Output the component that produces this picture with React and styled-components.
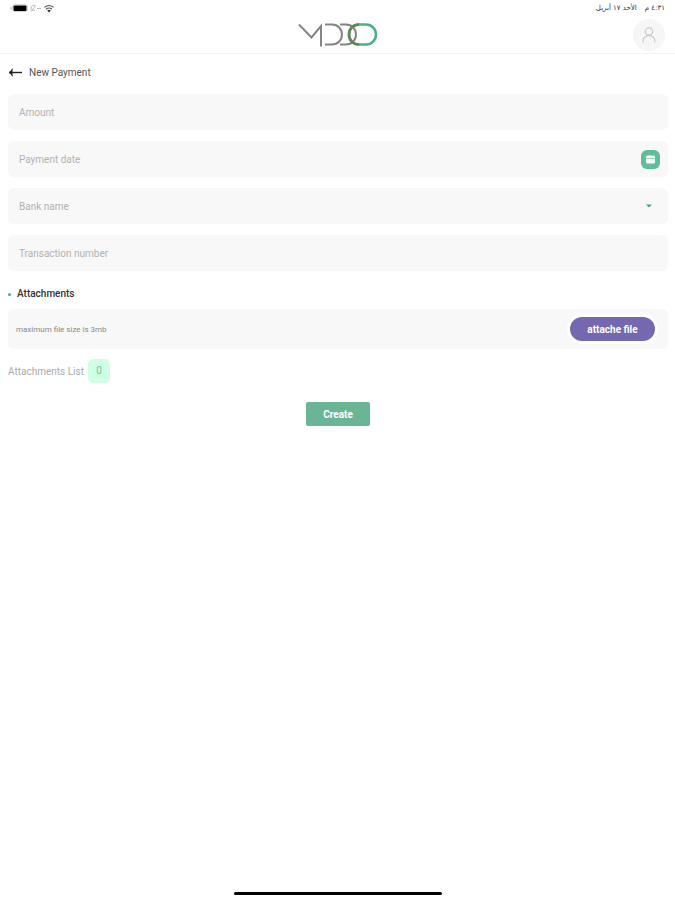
import { useState } from "react";
import styled, { createGlobalStyle } from "styled-components";

const GlobalStyle = createGlobalStyle`
  * {
    box-sizing: border-box;
  }
  body {
    margin: 0;
    background: #ffffff;
    font-family: Roboto, "Liberation Sans", sans-serif;
  }
  button, input, select {
    font-family: inherit;
  }
`;

const fields = [
  { name: "amount", label: "Amount" },
  { name: "date", label: "Payment date" },
  { name: "bank", label: "Bank name" },
  { name: "transaction", label: "Transaction number" },
];

const App = () => {
  const [values, setValues] = useState({
    amount: "",
    date: "",
    bank: "",
    transaction: "",
  });

  const handleChange = (e) => {
    setValues({ ...values, [e.target.name]: e.target.value });
  };

  return (
    <Page>
      <GlobalStyle />
      <StatusBar>
        <StatusIcons />
        <StatusTime dir="rtl" lang="ar">
          <span>٤:٣١ م</span>
          <span>الأحد ١٧ أبريل</span>
        </StatusTime>
      </StatusBar>

      <Header>
        <Logo />
        <Avatar type="button" aria-label="Profile">
          <svg width="14" height="16" viewBox="0 0 14 16" fill="none" stroke="#cccccc" strokeWidth="1.2">
            <circle cx="7" cy="4.5" r="3.7" />
            <path d="M1.2 15.5V13.5C1.2 11.2 3.6 9.2 7 8.2C10.4 9.2 12.8 11.2 12.8 13.5V15.5" />
          </svg>
        </Avatar>
      </Header>

      <Main>
        <TitleRow>
          <BackLink href="#" aria-label="Back">
            <svg width="14" height="10" viewBox="0 0 14 10" fill="none" stroke="#222222" strokeWidth="1.4">
              <path d="M14 5.5H1.5" />
              <path d="M4.5 1.7Q3.6 4.3 1 5.5Q3.6 6.7 4.5 9.3" fill="#222222" strokeWidth="1" />
            </svg>
          </BackLink>
          <Title>New Payment</Title>
        </TitleRow>

        <form onSubmit={(e) => e.preventDefault()}>
          <FieldList>
            {fields.map(({ name, label }) => (
              <Field key={name}>
                {name === "bank" ? (
                  <BankSelect name={name} aria-label={label} value={values.bank} onChange={handleChange}>
                    <option value="">{label}</option>
                  </BankSelect>
                ) : (
                  <TextInput
                    name={name}
                    type="text"
                    aria-label={label}
                    placeholder={label}
                    value={values[name]}
                    onChange={handleChange}
                  />
                )}
                {name === "date" && (
                  <DateButton type="button" aria-label="Choose date">
                    <svg width="9" height="9" viewBox="0 0 9 9">
                      <rect y="0.5" width="9" height="8" rx="1.5" fill="#ffffff" />
                      <path d="M0.5 3.5H8.5" stroke="#8bcdb3" />
                    </svg>
                  </DateButton>
                )}
                {name === "bank" && (
                  <Caret width="6" height="4" viewBox="0 0 6 4">
                    <path d="M0 0.5H6L3 3.5Z" fill="#3fa58a" />
                  </Caret>
                )}
              </Field>
            ))}
          </FieldList>

          <SectionTitle>Attachments</SectionTitle>
          <AttachBox>
            <Hint>maximum file size is 3mb</Hint>
            <AttachButton type="button">attache file</AttachButton>
          </AttachBox>
          <AttachList>
            Attachments List <Count>0</Count>
          </AttachList>

          <CreateButton type="submit">Create</CreateButton>
        </form>
      </Main>
      <HomeIndicator />
    </Page>
  );
};
export default App;

const StatusIcons = () => (
  <svg width="44" height="10" viewBox="0 0 44 10">
    <rect x="2.5" y="1.5" width="15" height="7" rx="2" fill="none" stroke="#c8c8c8" strokeWidth="0.8" />
    <rect x="3.5" y="2.5" width="13" height="5.5" rx="1" fill="#000000" />
    <path d="M1 4V6.5" stroke="#aaaaaa" />
    <g fill="none" stroke="#aaaaaa" strokeWidth="0.8">
      <path d="M25 3A2.5 2.5 0 1 0 25 7M26 2.5L21 8.5" />
      <path d="M27 5.5H31" />
    </g>
    <g fill="none" stroke="#555555" strokeWidth="1.2">
      <path d="M34.5 4.4Q39 0.6 43.5 4.4" />
      <path d="M36 6.2Q39 3.8 42 6.2" />
    </g>
    <path d="M37.2 7.5Q39 6.2 40.8 7.5L39 9.6Z" fill="#333333" />
  </svg>
);

const Logo = () => (
  <svg width="80" height="26" viewBox="0 0 80 26" fill="none" role="img" aria-label="MDDO">
    <g stroke="#858585" strokeWidth="2">
      <path d="M1 2.5L13.5 15.5L23 4V24.5" />
      <path d="M27 2.5H34C40 2.5 44 7 44 12.5S40 22.5 34 22.5H27" />
      <path d="M42 2.5H48C54 2.5 58 7 58 12.5S54 22.5 48 22.5H42" />
    </g>
    <rect x="51" y="2.5" width="27" height="20" rx="10" stroke="#50ae85" strokeWidth="2.6" />
    <path d="M61 2.5C55 2.5 51 7 51 12.5S55 22.5 61 22.5" stroke="#648559" strokeWidth="2.6" />
  </svg>
);

const Page = styled.div`
  min-height: 100vh;
  display: flex;
  flex-direction: column;
`;

const StatusBar = styled.div`
  height: 16px;
  padding: 0 10px;
  display: flex;
  align-items: center;
  justify-content: space-between;
`;

const StatusTime = styled.div`
  display: flex;
  gap: 8px;
  font-family: "DejaVu Sans", sans-serif;
  font-size: 7px;
  line-height: 16px;
  color: #333333;
`;

const Header = styled.header`
  height: 38px;
  padding: 0 10px;
  display: grid;
  grid-template-columns: 1fr auto 1fr;
  align-items: center;
  border-bottom: 1px solid #f2f2f2;
  > svg {
    grid-column: 2;
  }
`;

const Avatar = styled.button`
  justify-self: end;
  width: 32px;
  height: 32px;
  padding: 0;
  display: flex;
  align-items: center;
  justify-content: center;
  border: none;
  border-radius: 50%;
  background: #f6f6f6;
`;

const Main = styled.main`
  flex: 1;
  padding: 0 7px 0 8px;
`;

const TitleRow = styled.div`
  height: 36px;
  margin-bottom: 4px;
  display: flex;
  align-items: center;
  gap: 7px;
`;

const BackLink = styled.a`
  display: flex;
`;

const Title = styled.h1`
  margin: 0;
  font-size: 10px;
  font-weight: 400;
  color: #555555;
`;

const FieldList = styled.div`
  display: flex;
  flex-direction: column;
  gap: 11px;
`;

const Field = styled.div`
  display: flex;
  align-items: center;
  height: 36px;
  padding: 0 8px 0 11px;
  border-radius: 6px;
  background: #f8f8f8;
`;

const TextInput = styled.input`
  flex: 1;
  min-width: 0;
  height: 100%;
  padding: 0;
  border: none;
  outline: none;
  background: transparent;
  font-size: 10px;
  color: #555555;
  &::placeholder {
    color: #b2b2b2;
  }
`;

const BankSelect = styled.select`
  flex: 1;
  min-width: 0;
  height: 100%;
  padding: 0;
  border: none;
  outline: none;
  appearance: none;
  background: transparent;
  font-size: 10px;
  color: #b2b2b2;
`;

const DateButton = styled.button`
  width: 19px;
  height: 19px;
  padding: 0;
  display: flex;
  align-items: center;
  justify-content: center;
  border: none;
  border-radius: 6px;
  background: #5fbe98;
`;

const Caret = styled.svg`
  margin-right: 8px;
`;

const SectionTitle = styled.h2`
  margin: 16px 0 8px;
  display: flex;
  align-items: center;
  gap: 6px;
  font-size: 10px;
  line-height: 14px;
  font-weight: 500;
  color: #333333;
  &::before {
    content: "";
    width: 3px;
    height: 3px;
    border-radius: 50%;
    background: #45b08c;
  }
`;

const AttachBox = styled.div`
  height: 40px;
  padding: 0 10px 0 8px;
  display: flex;
  align-items: center;
  justify-content: space-between;
  border-radius: 6px;
  background: #f8f8f8;
`;

const Hint = styled.span`
  font-size: 8px;
  color: #888888;
`;

const AttachButton = styled.button`
  width: 91px;
  height: 30px;
  padding: 0;
  border: 3px solid #ffffff;
  border-radius: 15px;
  background: #7568b0;
  font-size: 10px;
  font-weight: 700;
  color: #ffffff;
`;

const AttachList = styled.div`
  margin-top: 10px;
  display: flex;
  align-items: center;
  gap: 4px;
  font-size: 10px;
  color: #aaaaaa;
`;

const Count = styled.span`
  width: 22px;
  height: 24px;
  border-radius: 5px;
  background: #cfffe4;
  line-height: 24px;
  text-align: center;
  color: #6cc9a0;
`;

const CreateButton = styled.button`
  display: block;
  width: 64px;
  height: 24px;
  margin: 19px auto 0;
  padding: 0;
  border: none;
  border-radius: 2px;
  background: #6ab596;
  font-size: 10px;
  font-weight: 700;
  color: #ffffff;
`;

const HomeIndicator = styled.div`
  width: 208px;
  height: 3px;
  margin: 0 auto 5px;
  border-radius: 2px;
  background: #000000;
`;
